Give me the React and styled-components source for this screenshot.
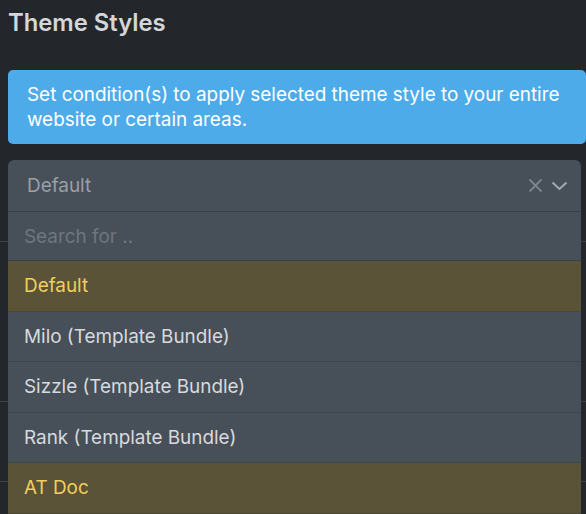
import React from "react";
import styled, { createGlobalStyle } from "styled-components";

const Global = createGlobalStyle`
  html, body { margin: 0; padding: 0; background: #23262b; overflow: hidden; }
  body { font-family: Inter, "Noto Sans", sans-serif; }
`;

const Page = styled.div`
  padding: 8px 5px 0 8px;
  height: 514px;
  box-sizing: border-box;
  overflow: hidden;
`;

const Title = styled.h2`
  margin: 0;
  font-size: 23.8px;
  line-height: 30px;
  font-weight: 600;
  color: #d4d6d9;
`;

const Info = styled.div`
  margin: 32px -5px 16px 0;
  padding: 12px 12px 12px 19px;
  background: #4dabea;
  border-radius: 5px;
  color: #ffffff;
  font-size: 18.9px;
  line-height: 25px;
`;

const SelectArea = styled.div`
  position: relative;
`;

const Backdrop = styled.div`
  display: flex;
  flex-direction: column;
  margin: 0 -5px 0 -8px;
`;

const BgRow = styled.div`
  height: ${(p) => p.h}px;
  border-bottom: 1px solid #3a3e45;
`;

const Dropdown = styled.div`
  position: absolute;
  top: 0;
  left: 0;
  right: 0;
  background: #474f59;
  border-radius: 6px 6px 0 0;
  overflow: hidden;
`;

const Control = styled.div`
  height: 51px;
  display: flex;
  align-items: center;
  padding: 0 13px 0 19px;
  border-bottom: 1px solid #3a4048;
`;

const Value = styled.div`
  flex: 1;
  color: #9aa0a8;
  font-size: 18.9px;
`;

const Icons = styled.div`
  display: flex;
  align-items: center;
  gap: 8px;
`;

const Search = styled.div`
  height: 48px;
  display: flex;
  align-items: center;
  padding: 0 16px;
  color: #6e7680;
  font-size: 18.9px;
  border-bottom: 1px solid #3a4048;
`;

const Option = styled.div`
  height: 49.5px;
  display: flex;
  align-items: center;
  padding: 0 16px;
  font-size: 18.9px;
  color: ${(p) => (p.active ? "#f0cf5e" : "#d7dade")};
  background: ${(p) => (p.active ? "#5a5337" : "#474f59")};
  border-bottom: 1px solid ${(p) => (p.active ? "#4c4733" : "#3e454e")};
`;

const options = [
  { label: "Default", active: true },
  { label: "Milo (Template Bundle)" },
  { label: "Sizzle (Template Bundle)" },
  { label: "Rank (Template Bundle)" },
  { label: "AT Doc", active: true },
];

export default function App() {
  return (
    <>
      <Global />
      <Page>
        <Title>Theme Styles</Title>
        <Info>
          Set condition(s) to apply selected theme style to your entire website or certain areas.
        </Info>
        <SelectArea>
          <Backdrop>
            <BgRow h={81} />
            <BgRow h={159} />
            <BgRow h={79} />
            <BgRow h={80} />
          </Backdrop>
          <Dropdown>
            <Control>
              <Value>Default</Value>
              <Icons>
                <svg width="15" height="15" viewBox="0 0 15 15">
                  <path d="M1.5 1.5 L13.5 13.5 M13.5 1.5 L1.5 13.5" stroke="#7d848d" strokeWidth="1.8" fill="none" />
                </svg>
                <svg width="17" height="10" viewBox="0 0 17 10">
                  <path d="M1.5 1.5 L8.5 8 L15.5 1.5" stroke="#a3a9b0" strokeWidth="1.9" fill="none" />
                </svg>
              </Icons>
            </Control>
            <Search>Search for ..</Search>
            {options.map((o) => (
              <Option key={o.label} active={o.active}>
                {o.label}
              </Option>
            ))}
          </Dropdown>
        </SelectArea>
      </Page>
    </>
  );
}
